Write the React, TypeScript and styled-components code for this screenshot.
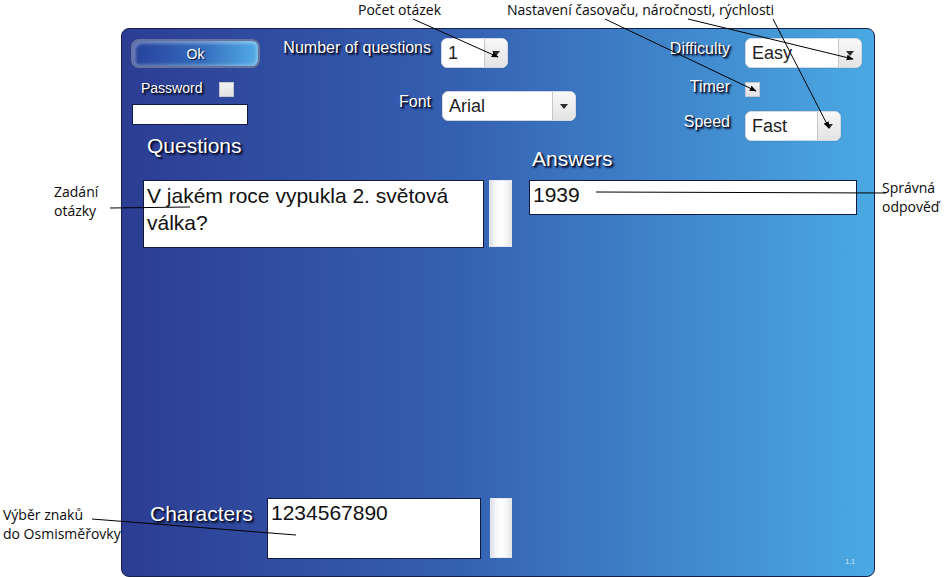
import styled, { createGlobalStyle } from "styled-components";

const GlobalStyle = createGlobalStyle`
  html, body {
    margin: 0;
    padding: 0;
    background: #fff;
  }
  body {
    font-family: "Liberation Sans", Arial, sans-serif;
  }
`;

const Page = styled.div`
  position: relative;
  width: 947px;
  height: 577px;
  box-sizing: border-box;
  padding: 28px 0 0 121px;
  overflow: hidden;
  background: #fff;
`;

const Panel = styled.div`
  width: 754px;
  height: 549px;
  box-sizing: border-box;
  border: 1px solid #17204a;
  border-radius: 8px;
  background: linear-gradient(to right, #2c3d93 0%, #3561b2 45%, #4aa9e2 100%);
  display: flex;
  flex-direction: column;
`;

const TopBar = styled.div`
  display: flex;
  align-items: flex-start;
  padding: 9px 12px 0 9px;
`;

const LoginColumn = styled.div`
  display: flex;
  flex-direction: column;
  width: 129px;
`;

const OkButton = styled.button`
  width: 129px;
  height: 29px;
  margin-top: 1px;
  box-sizing: border-box;
  border: 2px solid #66739e;
  border-radius: 8px;
  background: linear-gradient(to right, #26429a 0%, #346cbc 55%, #52ace6 100%);
  box-shadow: inset 3px 3px 3px rgba(255, 255, 255, 0.3), inset -2px -2px 3px rgba(255, 255, 255, 0.25);
  color: #fff;
  font-family: "Liberation Sans", Arial, sans-serif;
  font-size: 14px;
  text-shadow: 1px 1px 1px rgba(5, 10, 40, 0.9);
  padding: 0;
`;

const PasswordRow = styled.div`
  display: flex;
  align-items: flex-start;
  margin-top: 12px;
  padding-left: 10px;
  gap: 17px;
`;

const Label = styled.span<{ $size?: number }>`
  color: #fff;
  font-size: ${(p) => p.$size ?? 16}px;
  line-height: ${(p) => (p.$size ?? 16) + 2}px;
  text-shadow: 2px 2px 2px #0a0f30, 1px 1px 1px #0a0f30;
  white-space: nowrap;
`;

const FieldLabel = styled(Label)<{ $top?: number }>`
  margin-top: ${(p) => p.$top ?? 2}px;
  text-align: right;
`;

const CheckBox = styled.span<{ $top?: number }>`
  display: block;
  width: 15px;
  height: 15px;
  margin-top: ${(p) => p.$top ?? 0}px;
  box-sizing: border-box;
  border: 1px solid #c4c7cf;
  background: linear-gradient(#f2f2f2, #e2e2e4);
`;

const PasswordInput = styled.input`
  width: 116px;
  height: 21px;
  margin: 7px 0 0 1px;
  box-sizing: border-box;
  border: 1px solid #0f1a44;
  background: #fff;
  padding: 0 3px;
  outline: none;
`;

const SettingsColumn = styled.div`
  display: flex;
  flex-direction: column;
  gap: 23px;
  margin-left: 20px;
`;

const SettingsRow = styled.div<{ $labelWidth: number; $gap: number; $top?: number }>`
  display: grid;
  grid-template-columns: ${(p) => p.$labelWidth}px auto;
  column-gap: ${(p) => p.$gap}px;
  align-items: start;
  margin-top: ${(p) => p.$top ?? 0}px;
`;

const GameColumn = styled.div`
  display: flex;
  flex-direction: column;
  margin-left: auto;
`;

const SelectBox = styled.div<{ $w: number }>`
  display: flex;
  width: ${(p) => p.$w}px;
  height: 30px;
  box-sizing: border-box;
  border: 1px solid #d3d9e4;
  border-radius: 6px;
  overflow: hidden;
  background: #fff;
  box-shadow: 0 0 1px rgba(0, 0, 0, 0.25);
`;

const SelectValue = styled.span`
  flex: 1;
  padding-left: 6px;
  font-size: 18px;
  line-height: 28px;
  color: #1e1e1e;
`;

const SelectArrow = styled.span`
  width: 22px;
  display: flex;
  align-items: center;
  justify-content: center;
  border-left: 1px solid #c6c6c6;
  background: linear-gradient(#f8f8f8, #e3e3e3);
  &::after {
    content: "";
    border-left: 4px solid transparent;
    border-right: 4px solid transparent;
    border-top: 5px solid #2a2a2a;
  }
`;

const Middle = styled.div`
  display: flex;
  margin-top: -7px;
  padding-left: 21px;
`;

const QuestionGroup = styled.div`
  display: flex;
  flex-direction: column;
  width: 369px;
`;

const AnswerGroup = styled.div`
  display: flex;
  flex-direction: column;
  margin-left: 17px;
`;

const Heading = styled.span<{ $top?: number; $bottom?: number; $left?: number }>`
  color: #fff;
  font-size: 21px;
  line-height: 23px;
  text-shadow: 2px 2px 2px #0a0f30, 1px 1px 1px #0a0f30;
  margin: ${(p) => p.$top ?? 0}px 0 ${(p) => p.$bottom ?? 0}px ${(p) => p.$left ?? 0}px;
  white-space: nowrap;
`;

const FieldRow = styled.div`
  display: flex;
  align-items: flex-start;
`;

const TextArea = styled.textarea<{ $w: number; $h: number; $lh?: number }>`
  display: block;
  width: ${(p) => p.$w}px;
  height: ${(p) => p.$h}px;
  margin: 0;
  box-sizing: border-box;
  border: 1px solid #111a3c;
  padding: 1px 3px 0;
  font-family: "Liberation Sans", Arial, sans-serif;
  font-size: 21px;
  line-height: ${(p) => p.$lh ?? 25}px;
  color: #111;
  background: #fff;
  resize: none;
  overflow: hidden;
  outline: none;
`;

const AnswerInput = styled.input`
  display: block;
  width: 328px;
  height: 35px;
  margin: 0;
  box-sizing: border-box;
  border: 1px solid #111a3c;
  padding: 0 3px 5px;
  font-family: "Liberation Sans", Arial, sans-serif;
  font-size: 21px;
  color: #111;
  background: #fff;
  outline: none;
`;

const ScrollTrack = styled.div<{ $w: number; $h: number; $gap: number }>`
  width: ${(p) => p.$w}px;
  height: ${(p) => p.$h}px;
  margin-left: ${(p) => p.$gap}px;
  box-sizing: border-box;
  border: 1px solid #e4e7ee;
  background: linear-gradient(to right, #dcdee6 0%, #f6f6f7 22%, #fff 55%, #f2f2f2 85%, #e6e6e8 100%);
`;

const BottomRow = styled.div`
  display: flex;
  align-items: flex-start;
  margin-top: auto;
  padding: 0 19px 10px 28px;
`;

const CharsHeading = styled(Heading)`
  width: 117px;
  margin-top: 4px;
`;

const CharsArea = styled(TextArea)`
  margin-bottom: 7px;
`;

const Version = styled.span`
  margin-left: auto;
  align-self: flex-end;
  font-size: 7px;
  line-height: 8px;
  color: #d6e8f7;
`;

const Callout = styled.div<{ $x: number; $y: number }>`
  position: absolute;
  left: ${(p) => p.$x}px;
  top: ${(p) => p.$y}px;
  font-family: "Open Sans", "DejaVu Sans", sans-serif;
  font-size: 14px;
  line-height: 19px;
  color: #0a0a0a;
  white-space: nowrap;
`;

const Leaders = styled.svg`
  position: absolute;
  left: 0;
  top: 0;
  width: 947px;
  height: 577px;
  pointer-events: none;
`;

const Select = ({ width, value }: { width: number; value: string }) => (
  <SelectBox $w={width}>
    <SelectValue>{value}</SelectValue>
    <SelectArrow />
  </SelectBox>
);

const arrows = [
  [413, 19, 498, 57],
  [605, 19, 756, 91],
  [688, 19, 853, 59],
  [773, 19, 829, 128],
];

const plain = [
  [110, 208, 190, 207],
  [596, 192, 886, 193],
  [92, 519, 296, 535],
];

export default function App() {
  return (
    <>
      <GlobalStyle />
      <Page>
        <Panel>
          <TopBar>
            <LoginColumn>
              <OkButton>Ok</OkButton>
              <PasswordRow>
                <Label $size={14}>Password</Label>
                <CheckBox $top={2} />
              </PasswordRow>
              <PasswordInput type="password" />
            </LoginColumn>

            <SettingsColumn>
              <SettingsRow $labelWidth={151} $gap={10}>
                <FieldLabel $top={1}>Number of questions</FieldLabel>
                <Select width={67} value="1" />
              </SettingsRow>
              <SettingsRow $labelWidth={151} $gap={11}>
                <FieldLabel>Font</FieldLabel>
                <Select width={134} value="Arial" />
              </SettingsRow>
            </SettingsColumn>

            <GameColumn>
              <SettingsRow $labelWidth={63} $gap={15}>
                <FieldLabel>Difficulty</FieldLabel>
                <Select width={117} value="Easy" />
              </SettingsRow>
              <SettingsRow $labelWidth={63} $gap={15} $top={10}>
                <FieldLabel $top={0}>Timer</FieldLabel>
                <CheckBox $top={4} />
              </SettingsRow>
              <SettingsRow $labelWidth={63} $gap={15} $top={14}>
                <FieldLabel>Speed</FieldLabel>
                <Select width={96} value="Fast" />
              </SettingsRow>
            </GameColumn>
          </TopBar>

          <Middle>
            <QuestionGroup>
              <Heading $left={4} $bottom={23}>Questions</Heading>
              <FieldRow>
                <TextArea $w={341} $h={68} $lh={27} readOnly defaultValue="V jakém roce vypukla 2. světová válka?" />
                <ScrollTrack $w={23} $h={67} $gap={5} />
              </FieldRow>
            </QuestionGroup>
            <AnswerGroup>
              <Heading $left={3} $top={13} $bottom={10}>Answers</Heading>
              <AnswerInput readOnly defaultValue="1939" />
            </AnswerGroup>
          </Middle>

          <BottomRow>
            <CharsHeading>Characters</CharsHeading>
            <CharsArea $w={214} $h={61} readOnly defaultValue="1234567890" />
            <ScrollTrack $w={22} $h={60} $gap={9} />
            <Version>1.1</Version>
          </BottomRow>
        </Panel>

        <Callout $x={358} $y={0}>Počet otázek</Callout>
        <Callout $x={507} $y={0}>Nastavení časovaču, náročnosti, rýchlosti</Callout>
        <Callout $x={54} $y={182}>
          Zadání
          <br />
          otázky
        </Callout>
        <Callout $x={882} $y={178}>
          Správná
          <br />
          odpověď
        </Callout>
        <Callout $x={3} $y={505}>
          Výběr znaků
          <br />
          do Osmisměřovky
        </Callout>

        <Leaders viewBox="0 0 947 577">
          <defs>
            <marker id="head" viewBox="0 0 10 10" refX="9" refY="5" markerWidth="7" markerHeight="7" orient="auto">
              <path d="M0 1 L10 5 L0 9 Z" fill="#000" />
            </marker>
          </defs>
          {arrows.map(([x1, y1, x2, y2], i) => (
            <line key={`a${i}`} x1={x1} y1={y1} x2={x2} y2={y2} stroke="#000" strokeWidth={1} markerEnd="url(#head)" />
          ))}
          {plain.map(([x1, y1, x2, y2], i) => (
            <line key={`p${i}`} x1={x1} y1={y1} x2={x2} y2={y2} stroke="#000" strokeWidth={1} />
          ))}
        </Leaders>
      </Page>
    </>
  );
}
